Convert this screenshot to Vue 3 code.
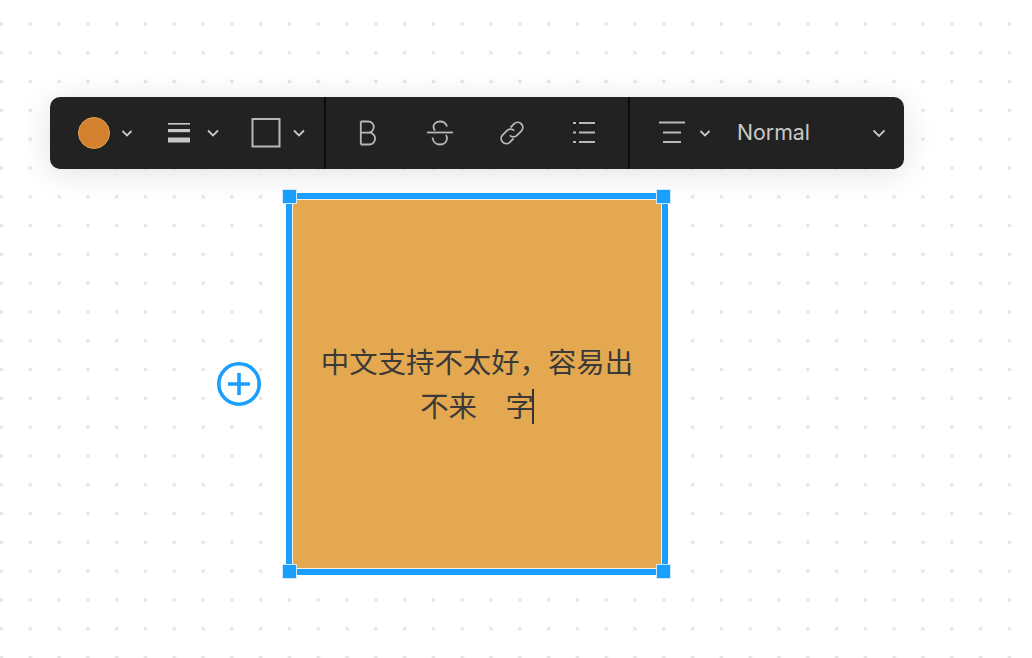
<template>
  <div class="canvas">
    <div class="toolbar">
      <div class="group first">
        <button class="tool" v-for="tool in shape_tools" :key="tool">
          <span class="slot">
            <svg v-if="tool === 'color'" width="32" height="32" viewBox="0 0 32 32">
              <circle cx="16" cy="16" r="15.5" fill="#d4812f" stroke="#e2a24f" stroke-width="1" />
            </svg>
            <svg v-else-if="tool === 'stroke'" width="32" height="32" viewBox="0 0 32 32">
              <rect x="4" y="6" width="22" height="1.6" fill="#c8c8c8" />
              <rect x="4" y="12" width="22" height="3.2" fill="#c8c8c8" />
              <rect x="4" y="20.500" width="22" height="5" fill="#c8c8c8" />
            </svg>
            <svg v-else width="32" height="32" viewBox="0 0 32 32">
              <rect x="2.5" y="2" width="27" height="27.5" fill="none" stroke="#b8b8b8" stroke-width="2" />
            </svg>
          </span>
          <svg class="chevron" width="12" height="12" viewBox="0 0 12 12">
            <path v-if="tool === 'color'" d="M1.500 4l4.500 4.500L10.500 4" />
            <path v-else d="M1 3.500l5 5 5-5" />
          </svg>
        </button>
      </div>
      <div class="divider"></div>
      <div class="group second">
        <button class="tool">
          <span class="slot">
            <svg class="line_icon" width="32" height="32" viewBox="0 0 32 32">
              <path d="M8.8 4.500v23M8.800 4.500h7.400a5.600 5.600 0 0 1 0 11.200H8.800M16.200 15.700h1a5.900 5.900 0 0 1 0 11.800H8.800" />
            </svg>
          </span>
        </button>
        <button class="tool">
          <span class="slot">
            <svg class="line_icon" width="32" height="32" viewBox="0 0 32 32">
              <path d="M3 15.500h26" />
              <path d="M23 9.500C22 6 19.500 4.500 16 4.500c-4 0-6.500 2.500-6.500 5.500 0 1.500.5 2.500 1.500 3.500" />
              <path d="M8.500 20.500c.5 4 3.500 7 7.500 7s7-2.500 7-6.500c0-1.500-.5-2-1-3" />
            </svg>
          </span>
        </button>
        <button class="tool">
          <span class="slot">
            <svg class="line_icon" width="32" height="32" viewBox="0 0 32 32">
              <path d="M14.500 10.500l3.800-3.800a5.100 5.100 0 0 1 7.200 7.200l-4.500 4.500a5.100 5.100 0 0 1-7.200 0" />
              <path d="M17.500 21.500l-3.800 3.800a5.100 5.100 0 0 1-7.200-7.200l4.500-4.500a5.100 5.100 0 0 1 7.200 0" />
            </svg>
          </span>
        </button>
        <button class="tool">
          <span class="slot">
            <svg class="line_icon" width="32" height="32" viewBox="0 0 32 32">
              <path d="M11 6h16M11 15.500h16M11 25h16" />
              <path class="bullets" d="M5 6h3M5 15.500h3M5 25h3" />
            </svg>
          </span>
        </button>
      </div>
      <div class="divider"></div>
      <div class="group third">
        <button class="tool">
          <span class="slot">
            <svg class="line_icon" width="32" height="32" viewBox="0 0 32 32">
              <path d="M3 5.500h26M7 15.500h18M7 25h18" />
            </svg>
          </span>
          <svg class="chevron" width="12" height="12" viewBox="0 0 12 12">
            <path d="M1.500 4l4.500 4.500L10.500 4" />
          </svg>
        </button>
        <button class="select">
          <span class="select_label">Normal</span>
          <svg class="chevron" width="12" height="12" viewBox="0 0 12 12">
            <path d="M.5 3.500l5.500 5.500 5.500-5.500" />
          </svg>
        </button>
      </div>
    </div>

    <div class="add_btn">
      <svg width="46" height="46" viewBox="0 0 46 46">
        <circle cx="23" cy="23" r="20.200" fill="#fff" stroke="#1a9fff" stroke-width="3.600" />
        <path d="M12 23h22M23 12v22" fill="none" stroke="#1a9fff" stroke-width="3.600" />
      </svg>
    </div>

    <div class="sticky">
      <p class="sticky_text">
        中文支持不太好，容易出<br />不来　字<span class="caret"></span>
      </p>
      <span class="handle tl"></span>
      <span class="handle tr"></span>
      <span class="handle bl"></span>
      <span class="handle br"></span>
    </div>
  </div>
</template>

<script setup>
const shape_tools = ['color', 'stroke', 'border']
</script>

<style>
html,
body {
  margin: 0;
  background: #fff;
}
</style>

<style scoped>
.canvas {
  position: relative;
  width: 1032px;
  height: 658px;
  overflow: hidden;
  background-color: #fff;
  background-image: radial-gradient(circle at center, #e4e4e4 0, #e4e4e4 1.300px, transparent 2.300px);
  background-size: 28.800px 28.800px;
  background-position: -12.900px 9.600px;
  font-family: Inter, 'Noto Sans', sans-serif;
}

/* 툴바 */
.toolbar {
  position: absolute;
  left: 50px;
  top: 96.500px;
  width: 854px;
  height: 72px;
  display: flex;
  align-items: stretch;
  background: #222;
  border-radius: 10px;
  box-shadow: 0 4px 32px rgba(0, 0, 0, 0.12);
}
.group {
  display: flex;
  align-items: center;
}
.first {
  width: 274px;
  box-sizing: border-box;
  padding-left: 28px;
  gap: 31px;
}
.second {
  width: 302px;
  box-sizing: border-box;
  padding-left: 26px;
  gap: 40px;
}
.third {
  flex: 1;
  padding-left: 26px;
  padding-right: 19px;
  gap: 26px;
}
.divider {
  width: 2px;
  background: #0c0c0c;
}
button {
  display: flex;
  align-items: center;
  padding: 0;
  border: none;
  background: none;
  font: inherit;
}
.tool {
  gap: 11px;
}
.slot {
  display: block;
  width: 32px;
  height: 32px;
}
.slot svg {
  display: block;
}
.chevron {
  fill: none;
  stroke: #c8c8c8;
  stroke-width: 1.800;
}
.line_icon {
  fill: none;
  stroke: #b8b8b8;
  stroke-width: 1.800;
}
.bullets {
  stroke-width: 2.200;
}
.select {
  flex: 1;
  justify-content: space-between;
  font-size: 21.300px;
  color: #c9c9c9;
}
.select_label {
  position: relative;
  top: -1px;
}

/* 플러스 버튼 */
.add_btn {
  position: absolute;
  left: 216px;
  top: 361px;
  width: 46px;
  height: 46px;
}
.add_btn svg {
  display: block;
}

/* 스티키 노트 */
.sticky {
  position: absolute;
  left: 286px;
  top: 193px;
  width: 382px;
  height: 382px;
  box-sizing: border-box;
  border: 6px solid #1a9fff;
  display: flex;
  align-items: center;
  justify-content: center;
  background: #e4a950;
  box-shadow: inset 0 0 0 1px #fbeedd;
}
.sticky_text {
  margin: 0;
  width: 340px;
  padding-bottom: 2px;
  text-align: center;
  font-family: 'Noto Sans CJK SC', sans-serif;
  font-size: 28.400px;
  line-height: 44px;
  color: #3b3a38;
}
.caret {
  display: inline-block;
  width: 1.500px;
  height: 35px;
  margin-left: -1.500px;
  vertical-align: -7px;
  background: #333;
}
.handle {
  position: absolute;
  width: 13px;
  height: 13px;
  background: #1a9fff;
  box-shadow: 0 0 0 1px #cfeaff;
}
.tl {
  left: -9px;
  top: -9px;
}
.tr {
  right: -8px;
  top: -9px;
}
.bl {
  left: -9px;
  bottom: -9px;
}
.br {
  right: -8px;
  bottom: -9px;
}
</style>
